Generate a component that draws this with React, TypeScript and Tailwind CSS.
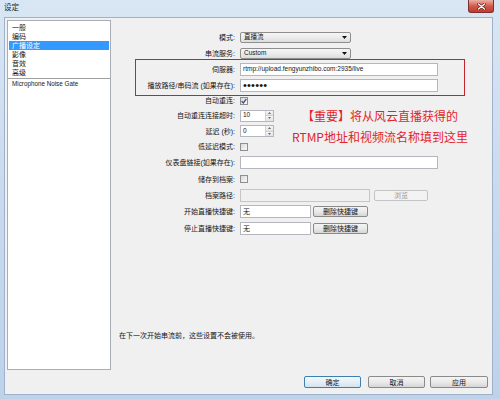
import React from "react";

function Row({ h, label, children }: { h: string; label: string; children?: React.ReactNode }) {
  return (
    <div className={`flex items-center shrink-0 ${h}`}>
      <div className="w-[124px] shrink-0 text-right leading-none whitespace-nowrap">{label}</div>
      <div className="ml-[5px] flex items-center">{children}</div>
    </div>
  );
}

function Combo({ text }: { text: string }) {
  return (
    <div className="w-[111px] h-[11px] border border-[#8e8e8e] rounded-[2px] bg-linear-to-b from-[#f5f5f5] via-[#ececec] to-[#dcdcdc] flex items-center justify-between pl-[3px] pr-[3px]">
      <span className="text-[6.5px] leading-none">{text}</span>
      <svg width="5" height="3" viewBox="0 0 5 3">
        <path d="M0 0h5L2.5 3z" fill="#111" />
      </svg>
    </div>
  );
}

function Checkbox({ checked }: { checked?: boolean }) {
  return (
    <div className="w-[8px] h-[8px] border border-[#8f8f8f] bg-linear-to-br from-[#d8d8d8] to-[#fbfbfb] flex items-center justify-center">
      {checked && (
        <svg width="6" height="6" viewBox="0 0 6 6">
          <path d="M0.6 3.1 L2.3 4.9 L5.4 0.9" stroke="#3b4f8c" strokeWidth="1.3" fill="none" />
        </svg>
      )}
    </div>
  );
}

function Spin({ value }: { value: string }) {
  return (
    <div className="w-[34px] h-[12px] border border-[#b4b7bf] bg-white flex">
      <div className="flex-1 pl-[2px] flex items-center text-[6.5px] leading-none">{value}</div>
      <div className="w-[8px] flex flex-col border-l border-[#d0d0d0]">
        <div className="flex-1 bg-linear-to-b from-[#f6f6f6] to-[#e4e4e4] border-b border-[#cfcfcf] flex items-center justify-center">
          <svg width="3" height="2" viewBox="0 0 3 2">
            <path d="M0 2h3L1.5 0z" fill="#6a6a6a" />
          </svg>
        </div>
        <div className="flex-1 bg-linear-to-b from-[#f6f6f6] to-[#e4e4e4] flex items-center justify-center">
          <svg width="3" height="2" viewBox="0 0 3 2">
            <path d="M0 0h3L1.5 2z" fill="#6a6a6a" />
          </svg>
        </div>
      </div>
    </div>
  );
}

function Btn({ children, cls }: { children: React.ReactNode; cls: string }) {
  return (
    <div
      className={`rounded-[2px] border flex items-center justify-center text-[7px] leading-none ${cls}`}
    >
      {children}
    </div>
  );
}

export default function App() {
  return (
    <div className="w-[500px] h-[399px] overflow-hidden bg-linear-to-b from-[#d9e6f4] via-[#c9daee] to-[#bed2ea] [font-family:'Liberation_Sans','Noto_Sans_CJK_SC',sans-serif] text-[#151515] flex flex-col">
      {/* title bar */}
      <div className="h-[17px] shrink-0 flex items-start justify-between">
        <div className="pl-[4px] pt-[3px] text-[7.5px] leading-[10px] text-[#1e1e1e]">设定</div>
        <div className="mr-[6px] w-[26px] h-[13px] rounded-b-[3px] border border-t-0 border-[#7d3030] bg-linear-to-b from-[#eab0a5] via-[#d25a4c] to-[#c0392d] flex items-center justify-center">
          <svg width="9" height="7" viewBox="0 0 9 7">
            <path d="M1.5 1 L7.5 6 M7.5 1 L1.5 6" stroke="#5a1a1a" strokeWidth="2.6" strokeLinecap="round" />
            <path d="M1.5 1 L7.5 6 M7.5 1 L1.5 6" stroke="#ffffff" strokeWidth="1.4" strokeLinecap="round" />
          </svg>
        </div>
      </div>

      {/* client area */}
      <div className="ml-[4px] w-[489px] h-[378px] border border-[#9eb2cb] bg-[#f0f0f0] flex flex-col">
        <div className="flex pt-[2px] pl-[2px]">
          {/* list */}
          <div className="w-[104px] h-[350px] shrink-0 border border-[#a9adb5] bg-white pt-[2px] text-[7px]">
            <div className="h-[9px] flex items-center pl-[4px] leading-none">一般</div>
            <div className="h-[9px] flex items-center pl-[4px] leading-none">编码</div>
            <div className="h-[9px] flex items-center mx-[1px] pl-[3px] leading-none bg-[#3399ff] text-white">广播设定</div>
            <div className="h-[9px] flex items-center pl-[4px] leading-none">影像</div>
            <div className="h-[9px] flex items-center pl-[4px] leading-none">音效</div>
            <div className="h-[9px] flex items-center pl-[4px] leading-none">高级</div>
            <div className="h-px bg-[#a0a0a0] mt-[1px]" />
            <div className="h-[9px] flex items-center pl-[4px] leading-none text-[6.3px] mt-[1px]">Microphone Noise Gate</div>
          </div>

          {/* settings pane */}
          <div className="flex-1 h-[350px] relative pt-[10px] flex flex-col text-[7px]">
            <Row h="h-[15px]" label="模式:">
              <Combo text="直播流" />
            </Row>
            <Row h="h-[16px]" label="串流服务:">
              <Combo text="Custom" />
            </Row>
            <div className="relative flex flex-col">
              <Row h="h-[17px]" label="伺服器:">
                <div className="w-[198px] h-[13px] border border-[#b4b7bf] bg-white flex items-center pl-[2px] text-[6.5px] leading-none">
                  rtmp://upload.fengyunzhibo.com:2935/live
                </div>
              </Row>
              <Row h="h-[15px]" label="播放路径/串码流 (如果存在):">
                <div className="w-[198px] h-[13px] border border-[#b4b7bf] bg-white flex items-center pl-[2px] text-[11px] leading-none tracking-[0.2px]">
                  ••••••
                </div>
              </Row>
              <div className="absolute -top-[2px] -bottom-[3px] left-[24px] right-[27px] border border-[#c0262b]" />
            </div>
            <Row h="h-[15px]" label="自动重连:">
              <Checkbox checked />
            </Row>
            <Row h="h-[15px]" label="自动重连连接超时:">
              <Spin value="10" />
            </Row>
            <Row h="h-[16px]" label="延迟 (秒):">
              <Spin value="0" />
            </Row>
            <Row h="h-[15px]" label="低延迟模式:">
              <Checkbox />
            </Row>
            <Row h="h-[17px]" label="仪表盘链接(如果存在):">
              <div className="w-[198px] h-[13px] border border-[#b4b7bf] bg-white" />
            </Row>
            <Row h="h-[16px]" label="储存到档案:">
              <Checkbox />
            </Row>
            <Row h="h-[16px]" label="档案路径:">
              <div className="w-[130px] h-[13px] border border-[#c6c6c6] bg-[#f0f0f0]" />
              <Btn cls="ml-[4px] w-[54px] h-[11px] border-[#c2c4c6] bg-[#f3f3f3] text-[#9a9a9a]">浏览</Btn>
            </Row>
            <Row h="h-[17px]" label="开始直播快捷键:">
              <div className="w-[71px] h-[13px] border border-[#b4b7bf] bg-white flex items-center pl-[2px] leading-none">无</div>
              <Btn cls="ml-[2px] w-[55px] h-[11px] border-[#8a8a8a] bg-linear-to-b from-[#f4f4f4] via-[#eaeaea] to-[#d6d6d6]">删除快捷键</Btn>
            </Row>
            <Row h="h-[17px]" label="停止直播快捷键:">
              <div className="w-[71px] h-[13px] border border-[#b4b7bf] bg-white flex items-center pl-[2px] leading-none">无</div>
              <Btn cls="ml-[2px] w-[55px] h-[11px] border-[#8a8a8a] bg-linear-to-b from-[#f4f4f4] via-[#eaeaea] to-[#d6d6d6]">删除快捷键</Btn>
            </Row>

            <div className="mt-auto mb-[30px] pl-[8px] leading-[9px]">在下一次开始串流前，这些设置不会被使用。</div>

            {/* annotation */}
            <div className="absolute left-[169px] top-[85px] w-[200px] text-center text-[12px] leading-[21px] text-[#e3242b] [font-family:'Noto_Sans_CJK_SC',sans-serif]">
              <div>【重要】将从风云直播获得的</div>
              <div>RTMP地址和视频流名称填到这里</div>
            </div>
          </div>
        </div>

        {/* bottom buttons */}
        <div className="flex justify-end pr-[4px] mt-[6px]">
          <Btn cls="w-[57px] h-[12px] border-[#3c7fb1] bg-linear-to-b from-[#f2f8fc] via-[#e6eff6] to-[#d3e2ee]">确定</Btn>
          <Btn cls="ml-[7px] w-[57px] h-[12px] border-[#8a8a8a] bg-linear-to-b from-[#f4f4f4] via-[#eaeaea] to-[#d6d6d6]">取消</Btn>
          <Btn cls="ml-[5px] w-[58px] h-[12px] border-[#8a8a8a] bg-linear-to-b from-[#f4f4f4] via-[#eaeaea] to-[#d6d6d6]">应用</Btn>
        </div>
      </div>
    </div>
  );
}
